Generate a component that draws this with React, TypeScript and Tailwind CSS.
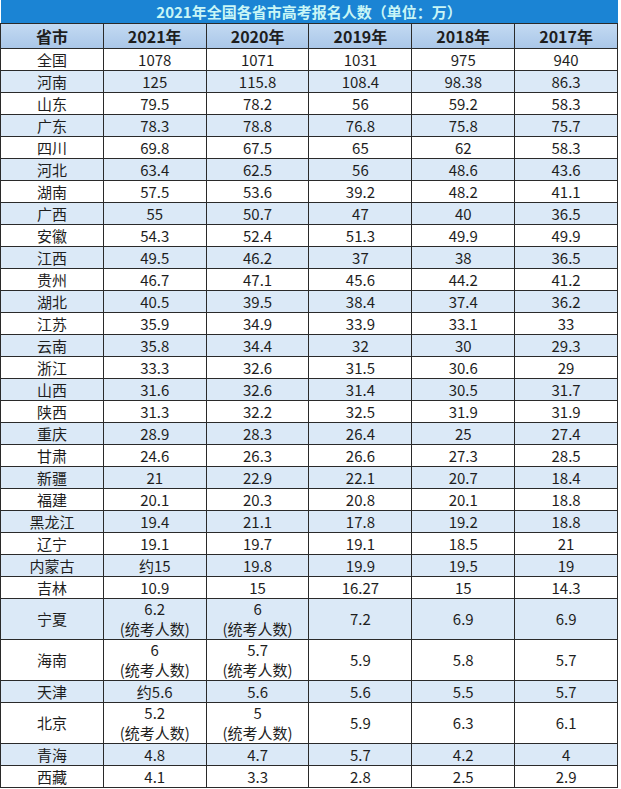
const rows: [string, string, string, string, string, string][] = [
  ['全国', '1078', '1071', '1031', '975', '940'],
  ['河南', '125', '115.8', '108.4', '98.38', '86.3'],
  ['山东', '79.5', '78.2', '56', '59.2', '58.3'],
  ['广东', '78.3', '78.8', '76.8', '75.8', '75.7'],
  ['四川', '69.8', '67.5', '65', '62', '58.3'],
  ['河北', '63.4', '62.5', '56', '48.6', '43.6'],
  ['湖南', '57.5', '53.6', '39.2', '48.2', '41.1'],
  ['广西', '55', '50.7', '47', '40', '36.5'],
  ['安徽', '54.3', '52.4', '51.3', '49.9', '49.9'],
  ['江西', '49.5', '46.2', '37', '38', '36.5'],
  ['贵州', '46.7', '47.1', '45.6', '44.2', '41.2'],
  ['湖北', '40.5', '39.5', '38.4', '37.4', '36.2'],
  ['江苏', '35.9', '34.9', '33.9', '33.1', '33'],
  ['云南', '35.8', '34.4', '32', '30', '29.3'],
  ['浙江', '33.3', '32.6', '31.5', '30.6', '29'],
  ['山西', '31.6', '32.6', '31.4', '30.5', '31.7'],
  ['陕西', '31.3', '32.2', '32.5', '31.9', '31.9'],
  ['重庆', '28.9', '28.3', '26.4', '25', '27.4'],
  ['甘肃', '24.6', '26.3', '26.6', '27.3', '28.5'],
  ['新疆', '21', '22.9', '22.1', '20.7', '18.4'],
  ['福建', '20.1', '20.3', '20.8', '20.1', '18.8'],
  ['黑龙江', '19.4', '21.1', '17.8', '19.2', '18.8'],
  ['辽宁', '19.1', '19.7', '19.1', '18.5', '21'],
  ['内蒙古', '约15', '19.8', '19.9', '19.5', '19'],
  ['吉林', '10.9', '15', '16.27', '15', '14.3'],
  ['宁夏', '6.2*', '6*', '7.2', '6.9', '6.9'],
  ['海南', '6*', '5.7*', '5.9', '5.8', '5.7'],
  ['天津', '约5.6', '5.6', '5.6', '5.5', '5.7'],
  ['北京', '5.2*', '5*', '5.9', '6.3', '6.1'],
  ['青海', '4.8', '4.7', '5.7', '4.2', '4'],
  ['西藏', '4.1', '3.3', '2.8', '2.5', '2.9'],
];

const years = ['2021年', '2020年', '2019年', '2018年', '2017年'];
const widths = ['w-[84px]', 'w-[108px]', 'w-[106px]', 'w-[108px]', 'w-[106px]', 'w-[106px]'];

function Cell({ value }: { value: string }) {
  if (value.endsWith('*')) {
    return (
      <div className="flex flex-col items-center leading-[20px]">
        <span>{value.slice(0, -1)}</span>
        <span>(统考人数)</span>
      </div>
    );
  }
  return <span>{value}</span>;
}

export default function App() {
  return (
    <div
      className="w-[621px] bg-white text-[#1e1e1e]"
      style={{ fontFamily: '"Noto Sans CJK SC", "Noto Sans", sans-serif' }}
    >
      <table className="w-[618px] table-fixed border-collapse">
        <thead>
          <tr>
            <th
              colSpan={6}
              className="h-[23px] bg-[#1b84d4] p-0 text-center text-[15px] font-bold leading-[23px] text-[#c9f6f6]"
            >
              2021年全国各省市高考报名人数（单位：万）
            </th>
          </tr>
          <tr className="bg-gradient-to-b from-[#c3daf2] to-[#a9c6e8]">
            <th className={`${widths[0]} h-[25px] border border-[#2a2a2a] p-0 text-[16px] font-bold`}>省市</th>
            {years.map((y, i) => (
              <th key={y} className={`${widths[i + 1]} h-[25px] border border-[#2a2a2a] p-0 text-[16px] font-bold`}>
                {y}
              </th>
            ))}
          </tr>
        </thead>
        <tbody>
          {rows.map((r, idx) => {
            const tall = r.some((v) => v.endsWith('*'));
            return (
              <tr key={r[0]} className={idx % 2 === 1 ? 'bg-[#dbe9f7]' : 'bg-white'}>
                {r.map((v, i) => (
                  <td
                    key={i}
                    className={`${tall ? 'h-[41px]' : 'h-[22px]'} border border-[#2a2a2a] p-0 text-center text-[15px] leading-[20px]`}
                  >
                    <Cell value={v} />
                  </td>
                ))}
              </tr>
            );
          })}
        </tbody>
      </table>
    </div>
  );
}
